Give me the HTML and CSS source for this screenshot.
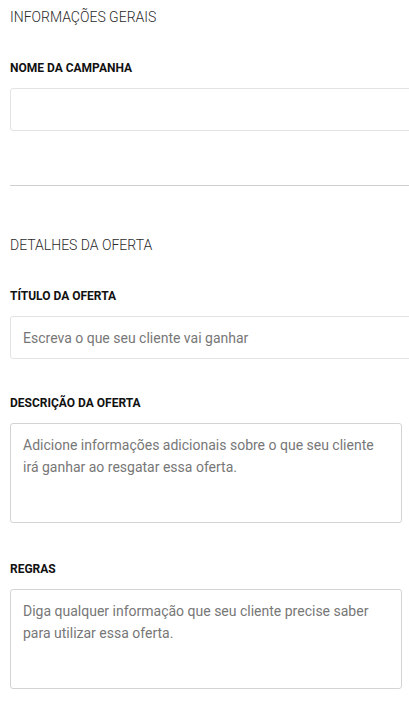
FILE: index.html
```html
<!DOCTYPE html>
<html lang="pt-BR">
<head>
  <meta charset="UTF-8" />
  <meta name="viewport" content="width=device-width, initial-scale=1.0"/>
  <title>Nova campanha</title>
  <link rel="stylesheet" href="styles.css">
</head>
<body>
  <form class="campaign-form">
    <section class="section">
      <h3 class="section-title">INFORMAÇÕES GERAIS</h3>
      <div class="field">
        <label class="field-label" for="nome">NOME DA CAMPANHA</label>
        <input class="field-input" id="nome" type="text" />
      </div>
    </section>

    <hr class="divider" />

    <section class="section">
      <h3 class="section-title">DETALHES DA OFERTA</h3>
      <div class="field">
        <label class="field-label" for="titulo">TÍTULO DA OFERTA</label>
        <input class="field-input" id="titulo" type="text" placeholder="Escreva o que seu cliente vai ganhar" />
      </div>
      <div class="field">
        <label class="field-label" for="descricao">DESCRIÇÃO DA OFERTA</label>
        <textarea class="field-area" id="descricao" placeholder="Adicione informações adicionais sobre o que seu cliente irá ganhar ao resgatar essa oferta."></textarea>
      </div>
      <div class="field field-last">
        <label class="field-label" for="regras">REGRAS</label>
        <textarea class="field-area" id="regras" placeholder="Diga qualquer informação que seu cliente precise saber para utilizar essa oferta."></textarea>
      </div>
    </section>
  </form>
</body>
</html>
```

FILE: styles.css
```css
    body {
      margin: 0;
      background: #fff;
      font-family: Roboto, 'Noto Sans', sans-serif;
      overflow: hidden;
    }

    .campaign-form {
      padding: 9px 7px 0 10px;
    }

    .section-title {
      margin: 0;
      font-size: 14px;
      line-height: 16px;
      font-weight: 300;
      color: #2a2a2a;
    }

    .field {
      margin-top: 36px;
    }

    .field + .field {
      margin-top: 37px;
    }

    .field + .field-last {
      margin-top: 39px;
    }

    .field-label {
      display: block;
      font-size: 12px;
      line-height: 14px;
      font-weight: 700;
      color: #111;
      margin-bottom: 13px;
    }

    .field-input,
    .field-area {
      display: block;
      box-sizing: border-box;
      margin: 0;
      border: 1px solid #e3e3e3;
      border-radius: 3px;
      background: #fff;
      font-family: Roboto, 'Noto Sans', sans-serif;
      font-size: 14px;
      color: #333;
      outline: none;
    }

    .field-input {
      width: calc(100% + 12px);
      height: 43px;
      padding: 0 12px;
    }

    .field-area {
      width: 100%;
      height: 100px;
      padding: 10px 12px;
      line-height: 22px;
      border-color: #d4d4d4;
      resize: none;
    }

    .field-input::placeholder,
    .field-area::placeholder {
      color: #777;
    }

    .divider {
      margin: 54px -7px 51px 0;
      border: 0;
      border-top: 1px solid #cfcfcf;
    }
```
